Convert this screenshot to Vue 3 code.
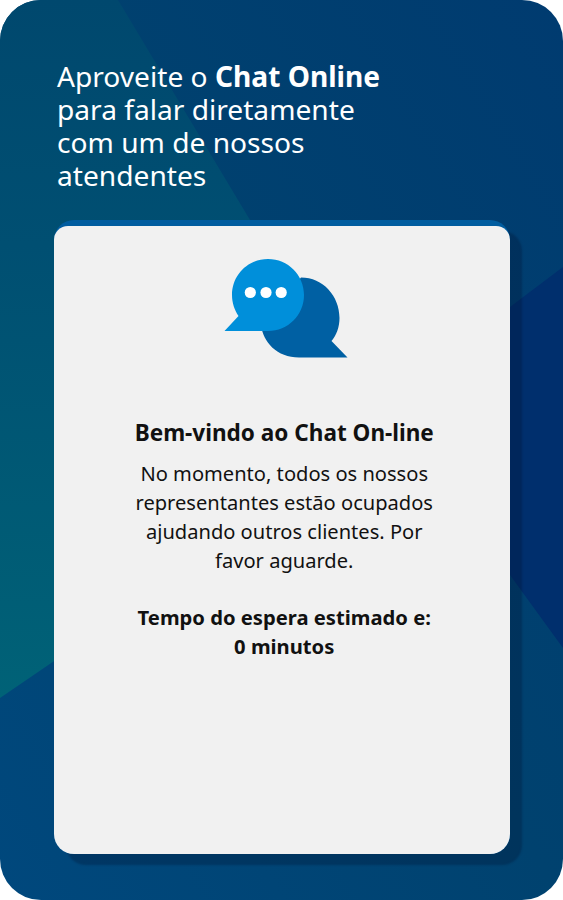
<script setup>
import { ref } from "vue";

const minutes = ref(0);
const dots = [250.3, 266, 281.2];
</script>

<template>
  <main class="screen">
    <svg class="backdrop" viewBox="0 0 563 900" preserveAspectRatio="none" aria-hidden="true">
      <defs>
        <linearGradient id="base" x1="0" y1="1" x2="1" y2="0">
          <stop offset="0" stop-color="#00487d" />
          <stop offset="0.5" stop-color="#00426f" />
          <stop offset="1" stop-color="#003b70" />
        </linearGradient>
        <linearGradient id="teal" x1="0" y1="0" x2="0" y2="1">
          <stop offset="0" stop-color="#00486e" />
          <stop offset="0.35" stop-color="#004f72" />
          <stop offset="1" stop-color="#006277" />
        </linearGradient>
      </defs>
      <rect width="563" height="900" fill="url(#base)" />
      <path d="M0 0H118L250 220L300 493L0 698Z" fill="url(#teal)" />
      <path d="M563 267L300 465L510 575L563 648Z" fill="#002f6d" />
    </svg>

    <h1 class="title">
      Aproveite o <strong>Chat Online</strong><br />
      para falar diretamente<br />
      com um de nossos<br />
      atendentes
    </h1>

    <section class="card">
      <div class="panel">
        <svg class="chat-icon" viewBox="224 258 124 100" width="124" height="100">
          <path
            d="M301 277.5C323 277.5 339.500 296 339.500 318C339.500 327 336.500 335 331.500 341L347.500 357.500H299C277 357.500 263 342 261 325Z"
            fill="#0060a3"
          />
          <path
            d="M268 259C288 259 304 275 304 295C304 315 288 331 268 331H224.500L238.500 316C234.500 310 232 303 232 295C232 275 248 259 268 259Z"
            fill="#008fda"
          />
          <circle v-for="x in dots" :key="x" :cx="x" cy="292.500" r="5.600" fill="#fff" />
        </svg>
        <h2 class="welcome">Bem-vindo ao Chat On-line</h2>
        <p class="message">
          No momento, todos os nossos<br />
          representantes estão ocupados<br />
          ajudando outros clientes. Por<br />
          favor aguarde.
        </p>
        <p class="wait">
          Tempo do espera estimado e:<br />
          {{ minutes }} minutos
        </p>
      </div>
    </section>
  </main>
</template>

<style>
body {
  background: #fff;
}
</style>

<style scoped>
.screen {
  position: relative;
  box-sizing: border-box;
  width: 563px;
  height: 900px;
  padding: 60px 53px 46px 53.5px;
  border-radius: 41px;
  overflow: hidden;
  font-family: "Noto Sans", sans-serif;
}

.backdrop {
  position: absolute;
  inset: 0;
  z-index: -1;
  width: 100%;
  height: 100%;
}

.title {
  margin: 0 0 28px 3.5px;
  font-size: 28.15px;
  font-weight: 400;
  line-height: 33px;
  color: #fff;
  white-space: nowrap;
}

.title strong {
  font-weight: 700;
}

/* card */
.card {
  box-sizing: border-box;
  height: 634px;
  padding-top: 6px;
  border-radius: 20px;
  background: #005c9f;
  box-shadow: 12px 11px 2px rgba(0, 20, 50, 0.3);
}

.panel {
  box-sizing: border-box;
  display: flex;
  flex-direction: column;
  align-items: center;
  height: 628px;
  padding-top: 32px;
  border-radius: 14px 14px 20px 20px;
  background: #f1f1f1;
  color: #111;
  text-align: center;
  white-space: nowrap;
}

.chat-icon {
  margin-left: 8px;
}

.welcome {
  margin: 60px 0 0 5px;
  font-size: 22.55px;
  font-weight: 700;
  line-height: 30px;
}

.message {
  margin: 11px 0 0 5px;
  font-size: 20.1px;
  line-height: 29px;
}

.wait {
  margin: 28px 0 0 5px;
  font-size: 20.2px;
  font-weight: 700;
  line-height: 29px;
}
</style>
